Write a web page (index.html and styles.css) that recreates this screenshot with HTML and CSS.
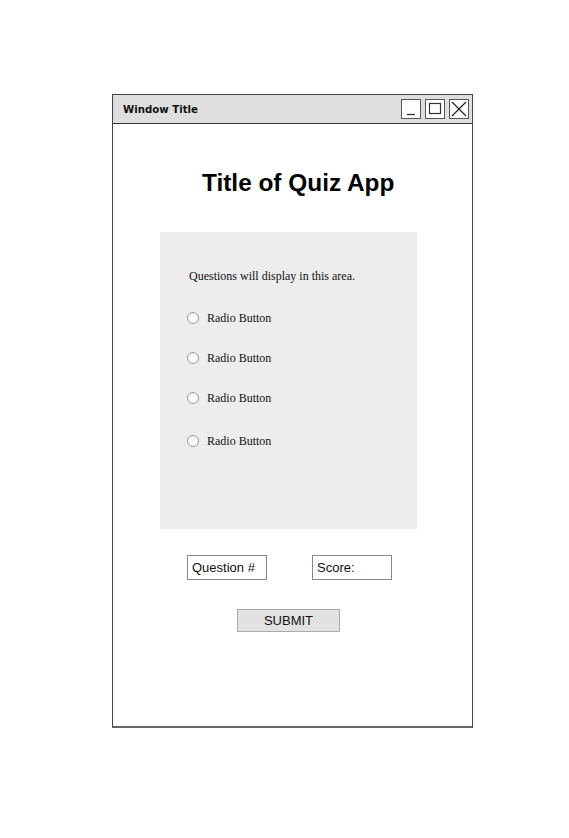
FILE: index.html
```html
<!DOCTYPE html>
<html>
<head>
<meta charset="utf-8">
<title>Quiz App</title>
<link rel="stylesheet" href="styles.css">
</head>
<body>
<div class="window">
  <div class="titlebar">
    <span class="wtitle">Window Title</span>
    <div class="wbtns">
      <div class="wbtn"><svg width="18" height="18" viewBox="0 0 18 18"><path d="M5 14.5H13" stroke="#333" stroke-width="1.3"/></svg></div>
      <div class="wbtn"><svg width="18" height="18" viewBox="0 0 18 18"><rect x="3.5" y="3.5" width="11" height="10" fill="none" stroke="#333" stroke-width="1.2"/></svg></div>
      <div class="wbtn"><svg width="18" height="18" viewBox="0 0 18 18"><path d="M2 2L16 16M16 2L2 16" stroke="#222" stroke-width="1.2"/></svg></div>
    </div>
  </div>
  <div class="content">
    <h1 class="apptitle">Title of Quiz App</h1>
    <div class="panel">
      <div class="question">Questions will display in this area.</div>
      <div class="option first"><span class="radio"></span><span class="label">Radio Button</span></div>
      <div class="option"><span class="radio"></span><span class="label">Radio Button</span></div>
      <div class="option"><span class="radio"></span><span class="label">Radio Button</span></div>
      <div class="option last"><span class="radio"></span><span class="label">Radio Button</span></div>
    </div>
    <div class="fields">
      <div class="field">Question #</div>
      <div class="field">Score:</div>
    </div>
    <div class="submit">SUBMIT</div>
  </div>
</div>
</body>
</html>
```
FILE: styles.css
```css
html, body {
  margin: 0;
  padding: 0;
  background: #ffffff;
}
body {
  padding: 94px 0 0 112px;
  font-family: "Liberation Sans", Arial, sans-serif;
}
.window {
  box-sizing: border-box;
  width: 361px;
  height: 634px;
  border: 1px solid #444;
  border-bottom: 2px solid #666;
  background: #fff;
}
.titlebar {
  height: 28px;
  border-bottom: 1px solid #333;
  background: #dedede;
  display: flex;
  align-items: center;
  justify-content: space-between;
  padding: 0 3px 0 10px;
}
.wtitle {
  font-family: "DejaVu Sans", sans-serif;
  font-weight: bold;
  font-size: 10.2px;
  color: #111;
}
.wbtns {
  display: flex;
  gap: 4px;
}
.wbtn {
  box-sizing: border-box;
  width: 20px;
  height: 20px;
  border: 1px solid #555;
  background: #fff;
  display: flex;
  align-items: center;
  justify-content: center;
}
.content {
  display: flex;
  flex-direction: column;
}
.apptitle {
  margin: 45px 0 0 89px;
  font-size: 24.4px;
  line-height: 28px;
  font-weight: bold;
  color: #000;
}
.panel {
  margin: 35px 0 0 47px;
  width: 257px;
  height: 297px;
  box-sizing: border-box;
  background: #ededed;
  padding: 36px 0 0 29px;
  display: flex;
  flex-direction: column;
  font-family: "Liberation Serif", "Times New Roman", serif;
  font-size: 12px;
  color: #111;
}
.question {
  height: 16px;
  line-height: 16px;
}
.option {
  height: 16px;
  line-height: 16px;
  display: flex;
  align-items: center;
  margin: 24px 0 0 -2px;
}
.option.first { margin-top: 26px; }
.option.last { margin-top: 27px; }
.radio {
  box-sizing: border-box;
  width: 12px;
  height: 12px;
  border: 1px solid #9a9a9a;
  border-radius: 50%;
  background: linear-gradient(#f4f4f4, #ffffff);
  margin-right: 8px;
}
.fields {
  display: flex;
  gap: 45px;
  margin: 26px 0 0 74px;
}
.field {
  box-sizing: border-box;
  width: 80px;
  height: 25px;
  border: 1px solid #888;
  background: #fff;
  font-size: 13px;
  line-height: 23px;
  padding-left: 4px;
  color: #111;
}
.submit {
  box-sizing: border-box;
  margin: 29px 0 0 124px;
  width: 103px;
  height: 23px;
  border: 1px solid #aaa;
  background: #e2e2e2;
  font-size: 13px;
  line-height: 21px;
  text-align: center;
  color: #111;
}
```
